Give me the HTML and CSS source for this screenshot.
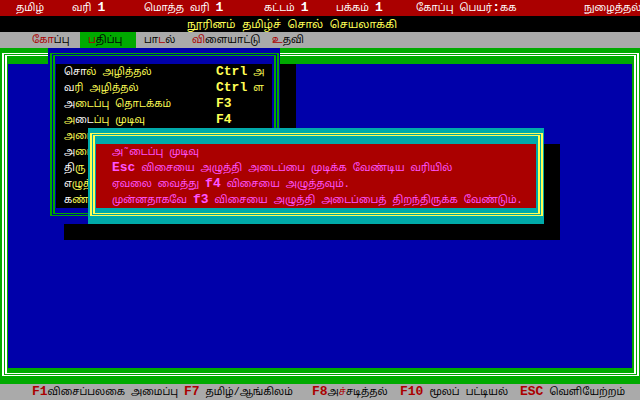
FILE: index.html
```html
<!DOCTYPE html>
<html lang="ta">
<head>
<meta charset="utf-8">
<title>தமிழ்ச் சொல் செயலாக்கி</title>
<link rel="stylesheet" href="styles.css">
</head>
<body>
<header class="status">
  <span>தமிழ்</span>
  <span>வரி <b>1</b></span>
  <span>மொத்த வரி <b>1</b></span>
  <span>கட்டம் <b>1</b></span>
  <span>பக்கம் <b>1</b></span>
  <span>கோப்பு பெயர்<b>:</b>கக</span>
  <span>நுழைத்தல்</span>
</header>
<h1 class="title">நூரினம் தமிழ்ச் சொல் செயலாக்கி</h1>
<nav class="menubar">
  <button type="button"><i>கோ</i>ப்பு</button>
  <button type="button" class="open"><i>ப</i>திப்பு</button>
  <button type="button">பா<i>ட</i>ல்</button>
  <button type="button"><i>வி</i>ளையாட்டு</button>
  <button type="button"><i>உ</i>தவி</button>
</nav>
<main class="editor">
  <div class="frame"><div class="frame-inner"><div class="page"></div></div></div>
  <div class="popup menu">
    <div class="frame"><div class="frame-inner"><div class="items">
      <button type="button"><span><i>சொ</i>ல் அழித்தல்</span><span><b>Ctrl</b> அ</span></button>
      <button type="button"><span><i>வ</i>ரி அழித்தல்</span><span><b>Ctrl</b> ள</span></button>
      <button type="button"><span><i>அ</i>டைப்பு தொடக்கம்</span><span><b>F3</b></span></button>
      <button type="button"><span>அ<i>டை</i>ப்பு முடிவு</span><span><b>F4</b></span></button>
      <button type="button"><span>அடை</span></button>
      <button type="button"><span><i>அ</i>டை</span></button>
      <button type="button"><span><i>தி</i>ரு</span></button>
      <button type="button"><span><i>எ</i>ழுத்</span></button>
      <button type="button"><span><i>க</i>ண்</span></button>
    </div></div></div>
  </div>
  <section class="popup dialog" role="dialog" aria-label="முடிவு">
    <div class="frame"><div class="frame-inner"><div class="message">
      <p>அ˜டைப்பு முடிவு</p>
      <p><b>Esc</b> விசையை அழுத்தி அடைப்பை முடிக்க வேண்டிய வரியில்</p>
      <p>ஏவலை வைத்து <b>f4</b> விசையை அழுத்தவும்.</p>
      <p>முன்னதாகவே <b>f3</b> விசையை அழுத்தி அடைப்பைத் திறந்திருக்க வேண்டும்.</p>
    </div></div></div>
  </section>
</main>
<footer class="keys">
  <button type="button"><b>F1</b>விசைப்பலகை அமைப்பு</button>
  <button type="button"><b>F7</b> தமிழ்/ஆங்கிலம்</button>
  <button type="button"><b>F8</b>அ<i>ச்</i>சடித்தல்</button>
  <button type="button"><b>F10</b> மூலப் பட்டியல்</button>
  <button type="button"><b>ESC</b> வெளியேற்றம்</button>
</footer>
</body>
</html>
```
FILE: styles.css
```css
:root {
  --red: #aa0000;
  --green: #00aa00;
  --blue: #0000aa;
  --teal: #00aaaa;
  --gray: #aaaaaa;
  --yellow: #ffff55;
  --pink: #ff55ff;
}
* { box-sizing: border-box; }
body {
  margin: 0;
  min-height: 100vh;
  display: flex;
  flex-direction: column;
  background: #000;
  font: 10px/14px "Liberation Mono", "Noto Sans Tamil", "Lohit Tamil", monospace;
}
b { font: bold 13px/1px "Liberation Mono", monospace; }
i { font-style: normal; }
button {
  margin: 0;
  padding: 2px 0 0;
  border: 0;
  background: none;
  color: inherit;
  font: inherit;
  text-align: left;
  white-space: nowrap;
}
.status, .title, .menubar, .keys {
  height: 16px;
  white-space: nowrap;
  overflow: hidden;
}
.status {
  display: grid;
  grid-template-columns: 56fr 72fr 120fr 72fr 80fr 168fr 56fr;
  padding: 2px 0 0 16px;
  background: var(--red);
  color: #fff;
}
.status span { min-width: 0; }
.title {
  margin: 0;
  padding: 2px 56px 0 0;
  font-size: 11px;
  font-weight: normal;
  text-align: center;
  color: var(--yellow);
}
.menubar {
  display: grid;
  grid-template-columns: 56fr 56fr 48fr 80fr 376fr;
  padding-left: 24px;
  background: var(--gray);
}
.menubar button { padding-left: 8px; }
.menubar .open { background: var(--green); }
.menubar i, .keys i, .keys b { color: var(--red); }
.editor {
  position: relative;
  flex: 1;
  display: flex;
  padding: 5px 1px 8px 2px;
  background: var(--green);
  color: #fff;
}
.frame, .frame-inner {
  flex: 1;
  display: flex;
  border: solid currentColor;
  border-width: 1px 2px;
}
.frame { padding: 1px; }
.frame-inner { padding: 8px 2px 5px 1px; }
.page {
  flex: 1;
  background: var(--blue);
}
.popup {
  position: absolute;
  display: flex;
  padding: 5px 1px 8px 2px;
  box-shadow: 16px 16px 0 #000;
}
.menu {
  left: 48px;
  top: 0;
  width: 232px;
  background: var(--blue);
  color: var(--green);
}
.items {
  flex: 1;
  background: #000;
  color: var(--yellow);
}
.items button {
  display: grid;
  grid-template-columns: 152px 1fr;
  width: 100%;
  height: 16px;
  padding-left: 8px;
}
.items i { color: #fff; }
.dialog {
  left: 88px;
  top: 80px;
  width: 456px;
  background: var(--teal);
  color: var(--yellow);
}
.message {
  flex: 1;
  padding-left: 16px;
  background: var(--red);
  color: var(--pink);
}
.message p {
  height: 16px;
  margin: 0;
  padding-top: 2px;
  white-space: nowrap;
}
.keys {
  display: grid;
  grid-template-columns: 152fr 128fr 88fr 120fr 120fr;
  padding-left: 32px;
  background: var(--gray);
}
.keys button { min-width: 0; }
```
